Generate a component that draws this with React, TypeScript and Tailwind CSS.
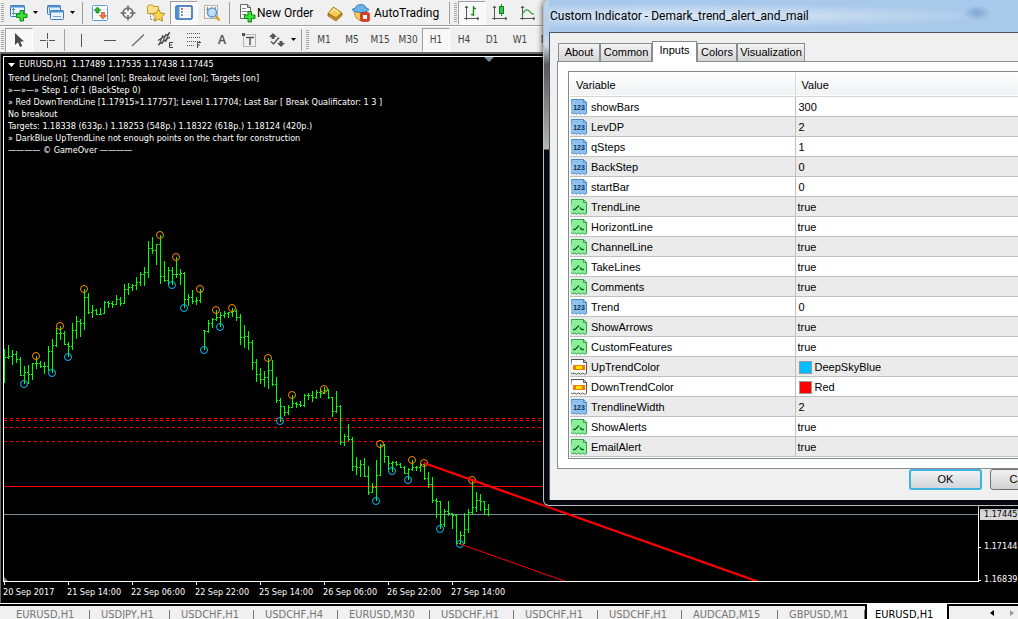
import React from 'react';

type RowKind = 'int' | 'bool' | 'color';

type InputRow = {
  kind: RowKind;
  name: string;
  value: string;
  swatch?: string;
};

const inputRows: InputRow[] = [
  { kind: 'int', name: 'showBars', value: '300' },
  { kind: 'int', name: 'LevDP', value: '2' },
  { kind: 'int', name: 'qSteps', value: '1' },
  { kind: 'int', name: 'BackStep', value: '0' },
  { kind: 'int', name: 'startBar', value: '0' },
  { kind: 'bool', name: 'TrendLine', value: 'true' },
  { kind: 'bool', name: 'HorizontLine', value: 'true' },
  { kind: 'bool', name: 'ChannelLine', value: 'true' },
  { kind: 'bool', name: 'TakeLines', value: 'true' },
  { kind: 'bool', name: 'Comments', value: 'true' },
  { kind: 'int', name: 'Trend', value: '0' },
  { kind: 'bool', name: 'ShowArrows', value: 'true' },
  { kind: 'bool', name: 'CustomFeatures', value: 'true' },
  { kind: 'color', name: 'UpTrendColor', value: 'DeepSkyBlue', swatch: 'bg-[#00bfff]' },
  { kind: 'color', name: 'DownTrendColor', value: 'Red', swatch: 'bg-[#ff0000]' },
  { kind: 'int', name: 'TrendlineWidth', value: '2' },
  { kind: 'bool', name: 'ShowAlerts', value: 'true' },
  { kind: 'bool', name: 'EmailAlert', value: 'true' },
];

const comments = [
  'Trend Line[on]; Channel [on]; Breakout level [on]; Targets [on]',
  '»—»—» Step 1 of 1 (BackStep 0)',
  '» Red DownTrendLine [1.17915»1.17757]; Level 1.17704; Last Bar [ Break Qualificator: 1 3 ]',
  'No breakout',
  'Targets: 1.18338 (633p.) 1.18253 (548p.) 1.18322 (618p.) 1.18124 (420p.)',
  '» DarkBlue UpTrendLine not enough points on the chart for construction',
  '———— © GameOver ————',
];

const times = [
  '20 Sep 2017',
  '21 Sep 14:00',
  '22 Sep 06:00',
  '22 Sep 22:00',
  '25 Sep 14:00',
  '26 Sep 06:00',
  '26 Sep 22:00',
  '27 Sep 14:00',
];

const timeframes = ['M1', 'M5', 'M15', 'M30', 'H1', 'H4', 'D1', 'W1', 'MN'];

const chartTabs = [
  { label: 'EURUSD,H1', width: 'w-[85px]' },
  { label: 'USDJPY,H1', width: 'w-20' },
  { label: 'USDCHF,H1', width: 'w-[84px]' },
  { label: 'USDCHF,H4', width: 'w-[84px]' },
  { label: 'EURUSD,M30', width: 'w-[92px]' },
  { label: 'USDCHF,H1', width: 'w-[84px]' },
  { label: 'USDCHF,H1', width: 'w-[84px]' },
  { label: 'USDCHF,H1', width: 'w-[84px]' },
  { label: 'AUDCAD,M15', width: 'w-24' },
  { label: 'GBPUSD,M1', width: 'w-[87px]' },
];

// high, low, close of each hourly bar; bars stand 4px apart
const bars = [
  [349, 383, 357], [345, 359, 356], [350, 365, 354], [351, 363, 359], [357, 376, 375],
  [366, 384, 372], [365, 384, 374], [363, 380, 363], [356, 369, 363], [361, 368, 366],
  [362, 374, 366], [346, 371, 351], [339, 373, 345], [328, 347, 333], [326, 340, 333],
  [331, 345, 344], [342, 357, 346], [323, 350, 330], [316, 339, 321], [319, 337, 323],
  [289, 330, 297], [293, 314, 312], [305, 318, 310], [309, 315, 314], [308, 315, 314],
  [301, 314, 302], [301, 308, 303], [301, 308, 304], [295, 305, 299], [297, 306, 303],
  [284, 304, 289], [283, 295, 287], [284, 291, 285], [277, 290, 282], [272, 286, 274],
  [267, 286, 272], [241, 278, 248], [237, 254, 250], [245, 265, 244], [235, 284, 276],
  [261, 282, 280], [267, 285, 270], [267, 285, 274], [257, 278, 274], [269, 285, 273],
  [272, 308, 299], [294, 306, 297], [290, 304, 301], [297, 305, 300], [289, 303, 291],
  [330, 350, 331], [320, 333, 323], [318, 328, 319], [310, 321, 317], [312, 327, 315],
  [311, 318, 313], [312, 318, 312], [308, 317, 311], [309, 321, 317], [314, 345, 337],
  [325, 348, 336], [331, 350, 342], [340, 370, 362], [359, 382, 374], [368, 384, 379],
  [371, 387, 377], [358, 389, 370], [360, 386, 384], [377, 403, 400], [398, 422, 406],
  [406, 416, 412], [405, 415, 407], [395, 408, 403], [402, 408, 404], [401, 407, 405],
  [394, 407, 395], [393, 400, 395], [391, 402, 397], [390, 399, 392], [389, 398, 393],
  [387, 394, 390], [389, 399, 397], [397, 417, 411], [391, 413, 406], [405, 445, 442],
  [434, 446, 436], [424, 441, 439], [437, 471, 466], [457, 475, 467], [460, 477, 464],
  [458, 477, 476], [466, 495, 492], [483, 493, 487], [460, 501, 475], [444, 476, 445],
  [444, 463, 456], [456, 470, 463], [461, 472, 462], [461, 466, 464], [463, 468, 467],
  [466, 474, 473], [468, 480, 469], [460, 471, 467], [466, 471, 467], [464, 472, 464],
  [463, 480, 478], [472, 488, 484], [477, 503, 500], [498, 518, 501], [501, 529, 524],
  [509, 527, 511], [501, 516, 513], [513, 529, 515], [514, 544, 543], [531, 545, 535],
  [513, 544, 529], [509, 533, 512], [479, 515, 507], [492, 512, 500], [494, 511, 501],
  [501, 515, 509], [504, 516, 514],
];

const peaks = [
  [36, 356], [60, 326], [84, 289], [160, 235], [176, 257], [200, 289], [216, 310], [232, 308],
  [268, 358], [292, 395], [324, 389], [380, 444], [412, 460], [424, 463], [472, 480],
];

const troughs = [
  [24, 384], [52, 373], [68, 357], [172, 285], [184, 308], [204, 350], [220, 327],
  [280, 421], [376, 501], [392, 471], [408, 480], [440, 529], [460, 544],
];

// open tick on the left, close tick on the right of every bar
const barPath = bars
  .map(([high, low, close], i) => {
    const x = 4 + i * 4;
    const open = i > 0 ? Math.min(Math.max(bars[i - 1][2], high), low - 1) : close;
    return `M${x + 0.5} ${high}V${low}M${x} ${close + 0.5}h2M${x - 1} ${open + 0.5}h1`;
  })
  .join('');

/* ---------- toolbar icons ---------- */

const Svg = ({ w = 20, h = 20, children }: { w?: number; h?: number; children: React.ReactNode }) => (
  <svg width={w} height={h} viewBox={`0 0 ${w} ${h}`} fill="none" className="shrink-0" aria-hidden="true">
    {children}
  </svg>
);

const Caret = () => (
  <Svg w={5} h={3}>
    <path d="M0 0h5L2.5 3z" fill="#000" />
  </Svg>
);

const Plus = ({ x, y }: { x: number; y: number }) => (
  <path
    transform={`translate(${x} ${y})`}
    d="M4 .5h3.500v3.500h3.500v3.500h-3.500v3.500h-3.500v-3.500h-3.500v-3.500h3.500z"
    fill="#3be03b"
    stroke="#0a8a14"
  />
);

const NewChartIcon = () => (
  <Svg>
    <rect x="1.500" y="2.500" width="14" height="11" rx="1" fill="#eaf4fd" stroke="#3a77b5" />
    <path d="M1 3.500h15" stroke="#4b90d0" strokeWidth="2" />
    <path d="M4.500 5v7M3 6.500h3M3 10.500h8" stroke="#5b87b0" />
    <Plus x={7} y={7} />
  </Svg>
);

const ProfilesIcon = () => (
  <Svg>
    <rect x="1.500" y="2.500" width="13" height="9" rx="1" fill="#dcebf8" stroke="#3a77b5" />
    <path d="M1 3.500h14" stroke="#4b90d0" strokeWidth="2" />
    <rect x="4.500" y="7.500" width="13" height="9" rx="1" fill="#e8f2fb" stroke="#3a77b5" />
    <path d="M4 8.500h14" stroke="#4b90d0" strokeWidth="2" />
    <path d="M3.500 5v5M7 13.500h8" stroke="#7a9cbd" />
  </Svg>
);

const MarketWatchIcon = () => (
  <Svg>
    <rect x="2.500" y="2.500" width="15" height="15" rx="1" fill="#fff" stroke="#58a0dc" />
    <path d="M5 6.500h11M5 9.500h11M5 12.500h11" stroke="#e4e4ee" />
    <path d="M7.500 4L11 7.500H9V10H6V7.500H4z" fill="#2cb52c" stroke="#0c7a14" strokeWidth=".6" />
    <path d="M13 16l3.500-3.500H14.500V9.500h-3v3H9.500z" fill="#f27a3a" stroke="#c23c10" strokeWidth=".6" />
  </Svg>
);

const DataWindowIcon = () => (
  <Svg>
    <circle cx="10" cy="10" r="5" stroke="#6b6b6b" strokeWidth="1.600" />
    <path d="M10 2.500v5.500M10 12v5.500M2.500 10h5.500M12 10h5.500" stroke="#6b6b6b" strokeWidth="1.600" />
  </Svg>
);

const NavigatorIcon = () => (
  <Svg>
    <path d="M1.500 3.500l1-1.500h4l1 1.500h5v7h-11z" fill="#fbe28a" stroke="#c79a26" />
    <path d="M4.500 11v6M5 16.500h5" stroke="#777" strokeDasharray="1 1" />
    <path d="M12.500 6l2 4 4.500.6-3.200 3.100.8 4.500-4.100-2.200-4 2.200.8-4.500L6 10.600l4.500-.6z" fill="#fcd84c" stroke="#b98a1b" />
  </Svg>
);

const TerminalIcon = () => (
  <Svg>
    <rect x="2" y="3" width="16" height="13" rx="1" fill="#fff" stroke="#1f63b0" strokeWidth="1.500" />
    <rect x="2.500" y="3.500" width="3" height="12" fill="#4d94dc" />
    <path d="M7 6h2" stroke="#d22" strokeWidth="1.500" />
    <path d="M7 9h2M7 12h2" stroke="#223" />
    <path d="M10 6h7M10 9h7M10 12h7" stroke="#dfe6f0" />
  </Svg>
);

const TesterIcon = () => (
  <Svg>
    <rect x="2.500" y="2.500" width="13" height="13" fill="#fbf6ee" stroke="#b7b0a4" />
    <path d="M5.500 4v8M4 6.500h3M13.500 4v6" stroke="#888" />
    <circle cx="10" cy="9.500" r="4.500" fill="#bfe0f8" stroke="#5b9bd0" strokeWidth="1.500" />
    <path d="M13.500 13l4 4.500" stroke="#d6a029" strokeWidth="2.600" />
  </Svg>
);

const NewOrderIcon = () => (
  <Svg>
    <path d="M3.500 1.500h7l3 3v11h-10z" fill="#fff" stroke="#666" />
    <path d="M10.500 1.500v3h3" stroke="#666" />
    <path d="M5 5.500h4M5 8.500h6M5 11.500h4" stroke="#888" />
    <Plus x={7} y={8} />
  </Svg>
);

const MetaEditorIcon = () => (
  <Svg>
    <path d="M3 10.500L8.500 4 17 10l-6 5z" fill="#f3cc52" stroke="#a6741a" />
    <path d="M3 10.500V13l8 5 6-5.500V10l-6 5z" fill="#c98f24" stroke="#8a5c12" strokeWidth=".7" />
    <path d="M5.500 10L9 6l5 3.500" stroke="#fdeaa0" strokeWidth="1.500" />
  </Svg>
);

const AutoTradingIcon = () => (
  <Svg>
    <path d="M3.500 8.500c0 5 3 9 7 9s5-4 5-9z" fill="#f6cf54" stroke="#b28a25" />
    <path d="M1 6.500c3 4 15 4 17 0l-3-1.500c0-4.500-10-4.500-10.500 0z" fill="#69b4e6" stroke="#2e79b5" />
    <rect x="9.500" y="9.500" width="9" height="9" rx="2" fill="#e23b22" stroke="#b61f0e" strokeWidth=".6" />
    <rect x="12" y="12" width="4" height="4" fill="#fff" />
  </Svg>
);

const BarChartIcon = () => (
  <Svg>
    <path d="M4.500 3v14M2 15.500h15M3 5l1.500-2L6 5M15 14l2 1.500-2 1.500" stroke="#555" />
    <path d="M11.500 3v10M9 11.500h2.500M11.500 5.500H14" stroke="#1a8a1a" strokeWidth="1.400" />
  </Svg>
);

const CandleIcon = () => (
  <Svg>
    <path d="M4.500 3v14M2 15.500h15M3 5l1.500-2L6 5M15 14l2 1.500-2 1.500" stroke="#555" />
    <path d="M11.500 1v12" stroke="#1a8a1a" />
    <rect x="9.500" y="3.500" width="4" height="7" fill="#2ecc40" stroke="#13801c" />
  </Svg>
);

const LineChartIcon = () => (
  <Svg>
    <path d="M4.500 3v14M2 15.500h15M3 5l1.500-2L6 5M15 14l2 1.500-2 1.500" stroke="#555" />
    <path d="M4 12c3-6 6-7 9-2l3 1.500" stroke="#3a9a3a" strokeWidth="1.300" />
  </Svg>
);

const CursorIcon = () => (
  <Svg>
    <path d="M6 3v12l3-2.700 2 4.700 2.300-1-2-4.500H15z" fill="#4a4a4a" />
  </Svg>
);

const CrossIcon = () => (
  <Svg>
    <path d="M10.500 3v6M10.500 12v6M3 10.500h6M12 10.500h6" stroke="#555" />
    <path d="M10 10.500h1" stroke="#555" />
  </Svg>
);

const VLineIcon = () => (
  <Svg>
    <path d="M9.500 4v13" stroke="#555" />
  </Svg>
);

const HLineIcon = () => (
  <Svg>
    <path d="M4 10.500h12" stroke="#555" />
  </Svg>
);

const TrendIcon = () => (
  <Svg>
    <path d="M4 16L16 4.500" stroke="#666" strokeWidth="1.200" />
  </Svg>
);

const ChannelIcon = () => (
  <Svg>
    <path d="M2 10.500L14 3M2 15l12-8M3 15l4-10M6 14l4-10M9.500 12l4-10" stroke="#4a4a4a" strokeWidth="1.200" />
    <path d="M17 12.500h-3.500v5H17M13.500 15H16" stroke="#444" />
  </Svg>
);

const FiboIcon = () => (
  <Svg>
    <path d="M3 3.500h14M3 7.500h14M3 11.500h14M3 15.500h8" stroke="#555" strokeDasharray="1 1" />
    <path d="M17 12.500h-3.500V18M13.500 15H16" stroke="#444" />
  </Svg>
);

const LabelIcon = () => (
  <Svg>
    <rect x="3.500" y="4.500" width="12" height="12" stroke="#777" strokeDasharray="1 1" />
    <path d="M2 3h3v3H2z" fill="#555" />
    <path d="M6 7.500h8M10 7v8" stroke="#555" strokeWidth="1.500" />
  </Svg>
);

const ArrowsIcon = () => (
  <Svg>
    <path d="M6 3l4 4H7.500v2h-3V7H2zM14 17l4-4h-2.500v-2h-3v2H10z" fill="#555" />
    <path d="M4 11.500l2.500 2.500L12 7.500" stroke="#555" strokeWidth="1.500" />
  </Svg>
);

/* ---------- table icons ---------- */

const RowIcon = ({ kind }: { kind: RowKind }) => {
  const fill = kind === 'int' ? '#8fc1f0' : kind === 'bool' ? '#8cf09a' : '#fff';
  const line = kind === 'int' ? '#4f8dc8' : kind === 'bool' ? '#35a34a' : '#555';
  return (
    <Svg w={16} h={16}>
      <path d="M.5 .5h12l3 3v11l-2 .8-2-1.300-2 1.300-2-1.300-2 1.300-2-1.300-2 .8-1-.8-2 .5z" fill={fill} stroke={line} />
      <path d="M12.500 .5v3h3z" fill="#fff" fillOpacity=".5" stroke={line} />
      {kind === 'int' && (
        <text x="8" y="11" textAnchor="middle" fontSize="7" fontWeight="700" fontFamily="Liberation Sans, sans-serif" fill="#0d2f57">
          123
        </text>
      )}
      {kind === 'bool' && <path d="M2 10.500h2l4-4M9 8.500l1.500 2H13" stroke="#0c6b22" strokeWidth="1.400" />}
      {kind === 'color' && (
        <>
          <rect x="2" y="6" width="12" height="5" fill="#f57c00" />
          <rect x="5" y="7" width="6" height="3" fill="#ffe600" />
        </>
      )}
    </Svg>
  );
};

/* ---------- toolbar parts ---------- */

type ToolProps = { label: string; width?: string; pressed?: boolean; children: React.ReactNode };

const Tool = ({ label, width = 'w-7', pressed, children }: ToolProps) => (
  <button
    type="button"
    aria-label={label}
    className={`flex h-6 shrink-0 items-center justify-center gap-1 ${width} ${
      pressed ? 'border border-t-[#a0a0a0] border-l-[#a0a0a0] border-r-white border-b-white bg-[#f8f8f8]' : ''
    }`}
  >
    {children}
  </button>
);

const Separator = () => <span className="mx-[3px] h-[22px] w-px shrink-0 bg-[#a0a0a0]" />;

const Grip = () => (
  <span className="mx-px h-5 w-[3px] shrink-0 bg-[repeating-linear-gradient(to_bottom,#a8a8a8_0_1px,#f0f0f0_1px_2px)]" />
);

const Toolbars = () => (
  <header className="shrink-0 bg-[#f0f0f0] font-['Roboto','Noto_Sans',sans-serif] text-xs text-black">
    <div className="flex h-[26px] items-center border-b border-[#a0a0a0]">
      <Grip />
      <Tool label="New chart" width="w-[37px]"><NewChartIcon /><Caret /></Tool>
      <Tool label="Profiles" width="w-[37px]"><ProfilesIcon /><Caret /></Tool>
      <Separator />
      <Tool label="Market Watch"><MarketWatchIcon /></Tool>
      <Tool label="Data Window"><DataWindowIcon /></Tool>
      <Tool label="Navigator"><NavigatorIcon /></Tool>
      <Tool label="Terminal" pressed><TerminalIcon /></Tool>
      <Tool label="Strategy Tester"><TesterIcon /></Tool>
      <Separator />
      <button type="button" className="flex h-6 w-[88px] shrink-0 items-center pl-1">
        <NewOrderIcon />
        <span className="whitespace-nowrap">New Order</span>
      </button>
      <Tool label="MetaEditor"><MetaEditorIcon /></Tool>
      <button type="button" className="flex h-6 w-[97px] shrink-0 items-center gap-[3px] pl-0.5">
        <AutoTradingIcon />
        <span className="whitespace-nowrap">AutoTrading</span>
      </button>
      <Separator />
      <Grip />
      <Tool label="Bar Chart" pressed><BarChartIcon /></Tool>
      <Tool label="Candlesticks"><CandleIcon /></Tool>
      <Tool label="Line Chart"><LineChartIcon /></Tool>
    </div>
    <div className="flex h-[26px] items-center border-t border-white">
      <Grip />
      <Tool label="Cursor" pressed><CursorIcon /></Tool>
      <Tool label="Crosshair"><CrossIcon /></Tool>
      <Separator />
      <Tool label="Vertical Line"><VLineIcon /></Tool>
      <Tool label="Horizontal Line"><HLineIcon /></Tool>
      <Tool label="Trendline"><TrendIcon /></Tool>
      <Tool label="Equidistant Channel"><ChannelIcon /></Tool>
      <Tool label="Fibonacci Retracement"><FiboIcon /></Tool>
      <Tool label="Text"><span className="font-['Noto_Sans',sans-serif] text-xs font-semibold text-[#555]">A</span></Tool>
      <Tool label="Text Label"><LabelIcon /></Tool>
      <Tool label="Arrows" width="w-[34px]"><ArrowsIcon /><Caret /></Tool>
      <Separator />
      <Grip />
      {timeframes.map((tf) => (
        <button
          key={tf}
          type="button"
          className={`h-6 w-7 shrink-0 text-center font-['DejaVu_Sans_Condensed','Noto_Sans',sans-serif] text-[10px] text-[#444] ${
            tf === 'H1' ? 'border border-t-[#a0a0a0] border-l-[#a0a0a0] border-r-white border-b-white bg-[#f8f8f8]' : ''
          }`}
        >
          {tf}
        </button>
      ))}
    </div>
  </header>
);

/* ---------- chart window ---------- */

const ChartDrawing = () => (
  <svg className="absolute inset-0 h-full w-full" aria-hidden="true">
    <g transform="translate(-4 -57)" fill="none">
      <g stroke="#f00" shapeRendering="crispEdges">
        <path d="M4 418.500H1018M4 420.500H1018M4 427.500H1018M4 441.500H1018" strokeDasharray="3 3" />
        <path d="M4 486.500H545" />
      </g>
      <path d="M4 514.500H1018" stroke="#778899" shapeRendering="crispEdges" />
      <path d={barPath} stroke="#0f0" shapeRendering="crispEdges" />
      {peaks.map(([x, y]) => (
        <circle key={`${x}-${y}`} cx={x} cy={y} r="3.500" stroke="#ff8c00" />
      ))}
      {troughs.map(([x, y]) => (
        <circle key={`${x}-${y}`} cx={x} cy={y} r="3.500" stroke="#00bfff" />
      ))}
      <path d="M424 463L762 583" stroke="#f00" strokeWidth="2.200" />
      <path d="M460 544L570 583" stroke="#f00" />
      <path d="M484 57h10l-5 5z" fill="#778899" />
      <path d="M4 577v5h5z" fill="#778899" />
    </g>
  </svg>
);

const PriceLabel = ({ price }: { price: string }) => (
  <span className="flex h-3 items-center gap-[3px]">
    <span className="h-px w-0.5 bg-white" />
    {price}
  </span>
);

const ChartWindow = () => (
  <main className="flex min-h-0 flex-1 flex-col border-t-2 border-l border-[#6a6a6a] bg-black pt-[2px] pl-[2px] font-['DejaVu_Sans_Condensed','Noto_Sans',sans-serif] text-[9px] text-white">
    <div className="flex min-h-0 flex-1">
      <div className="relative min-w-0 flex-1 overflow-hidden border border-white">
        <ChartDrawing />
        <div className="relative pl-1">
          <div className="flex h-4 items-center gap-1">
            <Svg w={7} h={4}>
              <path d="M0 0h7L3.500 4z" fill="#fff" />
            </Svg>
            <span className="whitespace-pre">EURUSD,H1  1.17489 1.17535 1.17438 1.17445</span>
          </div>
          {comments.map((line) => (
            <p key={line} className="h-3 leading-[10px] whitespace-nowrap">{line}</p>
          ))}
        </div>
      </div>
      <div className="flex w-[39px] shrink-0 flex-col justify-end whitespace-nowrap">
        <span className="mb-[21px] ml-px bg-[#d8d8d8] pl-1 leading-[11px] text-black">1.17445</span>
        <PriceLabel price="1.17144" />
        <span className="h-[21px]" />
        <div className="-mb-1">
          <PriceLabel price="1.16839" />
        </div>
      </div>
    </div>
    <ol className="flex h-[21px] shrink-0">
      {times.map((t) => (
        <li key={t} className="w-16 shrink-0 whitespace-nowrap">
          <span className="ml-px block h-[3px] w-px bg-white" />
          <span className="block leading-[14px]">{t}</span>
        </li>
      ))}
    </ol>
  </main>
);

const ChartTabs = () => (
  <nav className="flex h-4 shrink-0 border-t border-white bg-[#f0f0f0] font-['DejaVu_Sans_Condensed','Noto_Sans',sans-serif] text-[11px] text-[#777]">
    <span className="w-[5px] shrink-0 border-t-2 border-black" />
    {chartTabs.map((tab, i) => (
      <button
        key={i}
        type="button"
        className={`flex shrink-0 items-start justify-between border-t-2 border-black pl-[11px] text-left leading-[18px] whitespace-nowrap ${tab.width}`}
      >
        {tab.label}
        <span className="mt-1 h-3 w-px bg-[#777]" />
      </button>
    ))}
    <button type="button" className="flex w-[84px] shrink-0 items-start border-x-2 border-black bg-white pl-2 leading-[22px] text-black">
      EURUSD,H1
    </button>
    <div className="flex flex-1 items-center justify-end gap-4 border-t-2 border-black pr-1">
      <button type="button" aria-label="Scroll left">
        <Svg w={4} h={6}><path d="M4 0v6L0 3z" fill="#000" /></Svg>
      </button>
      <button type="button" aria-label="Scroll right">
        <Svg w={4} h={6}><path d="M0 0v6l4-3z" fill="#999" /></Svg>
      </button>
    </div>
  </nav>
);

/* ---------- dialog ---------- */

const dialogTabs = [
  { label: 'About', width: 'w-[42px]' },
  { label: 'Common', width: 'w-[52px]' },
  { label: 'Inputs', width: 'w-[45px]' },
  { label: 'Colors', width: 'w-10' },
  { label: 'Visualization', width: 'w-[68px]' },
];

const IndicatorDialog = () => (
  <section
    role="dialog"
    aria-labelledby="dialog-title"
    className="absolute top-0 left-[543px] w-[560px] rounded-md border border-t-0 border-[#b8bdc2] bg-[linear-gradient(to_bottom,#bcd4ee_0px,#b4d0ec_33px,#d5dce4_45px,#55585c_65px,#b5b5b5_149px,#05080c_150px)] px-[5px] pb-[5px] font-['Liberation_Sans',Arial,sans-serif] text-[11px] text-black shadow-[0_0_6px_rgba(0,0,0,0.8)]"
  >
    <h1
      id="dialog-title"
      className="flex h-8 items-center bg-[radial-gradient(ellipse_14px_8px_at_428px_13px,#7fa6d4_0px,transparent_14px),radial-gradient(ellipse_at_130px_16px,#dceaf8_0px,#bdd5ee_200px,#a9c9ea_320px)] pl-px font-['Roboto','Noto_Sans',sans-serif] text-xs whitespace-nowrap"
    >
      Custom Indicator - Demark_trend_alert_and_mail
    </h1>
    <div className="border-t border-l border-[#4a5560] bg-[#f0f0f0] pt-2 pl-[7px]">
      <div role="tablist" className="flex h-5 items-end pl-px">
        {dialogTabs.map((tab) => {
          const active = tab.label === 'Inputs';
          return (
            <button
              key={tab.label}
              type="button"
              role="tab"
              aria-selected={active}
              className={`shrink-0 border border-b-0 border-[#898c95] text-center ${tab.width} ${
                active ? 'relative z-10 -mb-px h-[21px] bg-white pb-1' : 'h-[18px] bg-linear-to-b from-[#f4f4f4] to-[#d4d4d4]'
              }`}
            >
              {tab.label}
            </button>
          );
        })}
      </div>
      <div role="tabpanel" className="border border-[#898c95] bg-white pt-[9px] pb-[9px] pl-[10px]">
        <div className="border border-[#828790] bg-white pr-px pb-px pl-px">
          <table className="w-full table-fixed border-collapse text-left">
            <thead>
              <tr className="h-6 border-b border-[#d5d5d5] bg-linear-to-b from-white to-[#f1f2f4]">
                <th className="w-[225px] border-r border-[#dcdcdc] pt-0.5 pl-[6px] font-normal">Variable</th>
                <th className="pt-0.5 pl-[6px] font-normal">Value</th>
              </tr>
            </thead>
            <tbody>
              {inputRows.map((row) => (
                <tr key={row.name} className="h-5 border-b border-[#c0c0c0] even:bg-[#ebebeb]">
                  <td className="border-r border-[#c0c0c0] p-0 pt-0.5">
                    <span className="flex items-center gap-1 pl-px">
                      <RowIcon kind={row.kind} />
                      {row.name}
                    </span>
                  </td>
                  <td className="p-0 pt-0.5">
                    <span className={`flex items-center gap-[3px] ${row.kind === 'bool' ? 'pl-0.5' : 'pl-[3px]'}`}>
                      {row.swatch && <span className={`h-[13px] w-[13px] border border-[#999] ${row.swatch}`} />}
                      {row.value}
                    </span>
                  </td>
                </tr>
              ))}
            </tbody>
          </table>
        </div>
      </div>
      <div className="flex h-[31px] gap-2 pl-[352px]">
        <button
          type="button"
          className="h-[21px] w-[73px] rounded-[3px] border-2 border-[#3cb4e0] bg-linear-to-b from-[#f2f2f2] to-[#d2d6da]"
        >
          OK
        </button>
        <button
          type="button"
          className="h-[21px] w-[73px] rounded-[3px] border border-[#707070] bg-linear-to-b from-[#f2f2f2] to-[#d0d0d0]"
        >
          Cancel
        </button>
      </div>
    </div>
  </section>
);

const App: React.FC = () => {
  return (
    <div className="relative flex h-screen flex-col overflow-hidden bg-[#f0f0f0]">
      <Toolbars />
      <ChartWindow />
      <ChartTabs />
      <IndicatorDialog />
    </div>
  );
};

export default App;
